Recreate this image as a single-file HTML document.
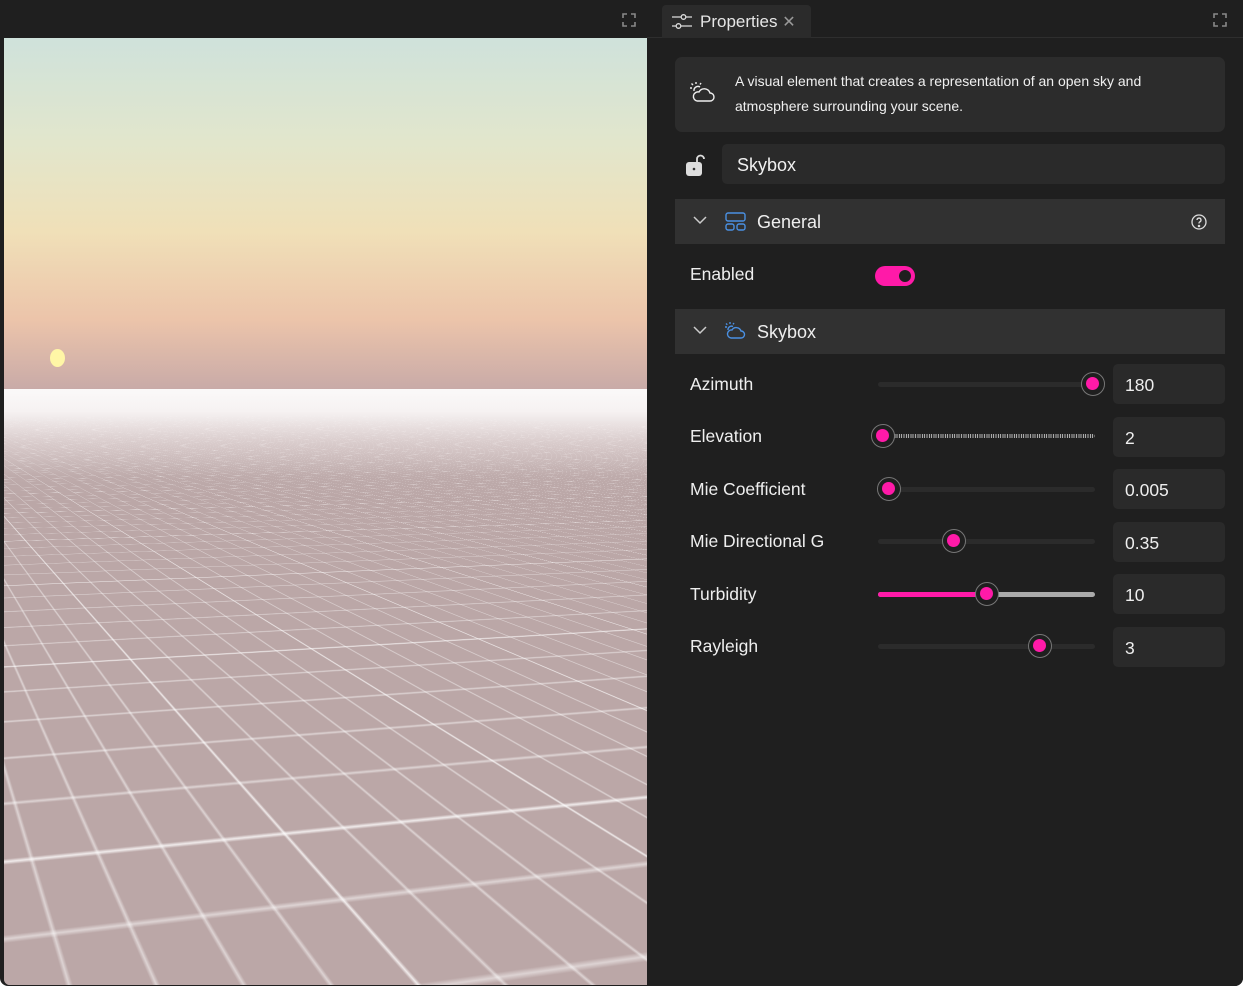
<!DOCTYPE html>
<html><head><meta charset="utf-8">
<style>
*{margin:0;padding:0;box-sizing:border-box}
body{width:1246px;height:992px;background:#fff;font-family:"Segoe UI","Liberation Sans",sans-serif;overflow:hidden;position:relative}
.win{position:absolute;left:0;top:0;width:1243px;height:986px;background:#1f1f1f;border-radius:0 0 8px 8px;overflow:hidden}
.topl{position:absolute;left:0;top:0;width:647px;height:38px;background:#1f1f1f}
.vp{position:absolute;left:4px;top:38px;width:643px;height:947px;overflow:hidden;border-radius:0 0 0 6px;perspective:500px;perspective-origin:-60px 351px;background:#bba7a7}
.sky{position:absolute;left:0;top:0;width:100%;height:352px;background:linear-gradient(180deg,#cfe2db 0%,#e2e6cc 30%,#f0e0b8 55%,#ecc4aa 80%,#c8aaa8 100%);z-index:3}
.plane{position:absolute;left:-3060px;top:52px;width:6000px;height:2600px;transform-origin:50% 450px;transform:rotateX(-90deg) rotateZ(6deg);
background-color:#bba7a7;
background-image:
linear-gradient(90deg,rgba(255,255,255,.55) 0 1.2px,transparent 1.2px),
linear-gradient(0deg,rgba(255,255,255,.55) 0 1.2px,transparent 1.2px),
linear-gradient(90deg,rgba(255,255,255,.5) 0 .8px,transparent .8px),
linear-gradient(0deg,rgba(255,255,255,.5) 0 .8px,transparent .8px);
background-size:110px 110px,110px 110px,22px 22px,22px 22px}
.fog{position:absolute;left:0;top:351px;width:100%;height:110px;background:linear-gradient(180deg,#fbf9f9 0%,#f6f2f2 20%,rgba(235,226,226,.7) 45%,rgba(200,185,185,.2) 80%,rgba(187,167,167,0) 100%);z-index:3}
.sun{position:absolute;left:46px;top:311px;width:15px;height:18px;border-radius:50%;background:#fff6a6;z-index:4}
.right{position:absolute;left:647px;top:0;width:596px;height:986px;background:#1f1f1f}
.tab{position:absolute;left:15px;top:5px;width:149px;height:33px;background:#2b2b2b;border-radius:4px 4px 0 0;color:#e6e6e6;font-size:17px;line-height:33px;padding-left:38px}
.tabline{position:absolute;left:0;top:37px;width:100%;height:1px;background:#2e2e2e}
.desc{position:absolute;left:28px;top:57px;width:550px;height:75px;background:#2c2c2c;border-radius:7px;color:#f0f0f0;font-size:14px;line-height:25px;padding:12px 0 0 60px}
.name{position:absolute;left:75px;top:144px;width:503px;height:40px;background:#2a2a2a;border-radius:5px;color:#f0f0f0;font-size:18px;line-height:42px;padding-left:15px}
.sec{position:absolute;left:28px;width:550px;height:45px;background:#313131;color:#eee;font-size:18px;line-height:46px;padding-left:82px}
.lbl{position:absolute;left:43px;color:#eee;font-size:17.5px}
.box{position:absolute;left:466px;width:112px;height:40px;background:#2a2a2a;border-radius:5px;color:#eee;font-size:17.5px;line-height:42px;padding-left:12px}
.track{position:absolute;left:231px;width:217px;height:5px;background:#2b2b2b;border-radius:3px}
.knob{position:absolute;width:24px;height:24px;border-radius:50%;background:#1f1f1f;border:1.5px solid #777}
.knob::after{content:"";position:absolute;left:4px;top:4px;width:13px;height:13px;border-radius:50%;background:#ff1aa8}
.tog{position:absolute;left:228px;top:266px;width:40px;height:20px;border-radius:10px;background:#ff1aa8}
.tog::after{content:"";position:absolute;right:4px;top:4px;width:12px;height:12px;border-radius:50%;background:#1f1f1f}
</style></head><body>
<div class="win">
<div class="topl"></div>
<svg style="position:absolute;left:622px;top:13px" width="14" height="14" viewBox="0 0 14 14" fill="none" stroke="#888" stroke-width="1.6"><path d="M1 5V1h4M9 1h4v4M13 9v4H9M5 13H1V9"/></svg>
<div class="vp">
<div class="plane"></div>
<div class="sky"></div>
<div class="fog"></div>
<div class="sun"></div>
<svg style="position:absolute;left:510px;top:826px;z-index:5" width="110" height="100">
<circle cx="14" cy="51" r="8" fill="#d45a5a"/>
<circle cx="53" cy="90" r="8" fill="#5aa85a"/>
<circle cx="57" cy="46" r="8" fill="#5b7fd0"/>
<line x1="54" y1="20" x2="54" y2="52" stroke="#1a9a1a" stroke-width="2"/>
<line x1="54" y1="52" x2="90" y2="52" stroke="#e01010" stroke-width="2"/>
<circle cx="54" cy="13" r="10" fill="#1aaa1a"/><text x="54" y="18" fill="#fff" font-size="13" font-weight="bold" text-anchor="middle" font-family="Liberation Sans">Y</text>
<circle cx="93" cy="52" r="10" fill="#ee1010"/><text x="93" y="57" fill="#fff" font-size="13" font-weight="bold" text-anchor="middle" font-family="Liberation Sans">X</text>
<circle cx="50" cy="58" r="10" fill="#1a4ef0"/><text x="50" y="63" fill="#fff" font-size="13" font-weight="bold" text-anchor="middle" font-family="Liberation Sans">Z</text>
</svg>
</div>
<div class="right">
<div class="tabline"></div>
<div class="tab">Properties <span style="color:#999;font-size:16px">✕</span>
<svg style="position:absolute;left:10px;top:8px" width="20" height="17" fill="none" stroke="#ddd" stroke-width="1.3"><path d="M0 4h9M14 4h6M0 13h4M9 13h11"/><circle cx="11.5" cy="4" r="2.3"/><circle cx="6.5" cy="13" r="2.3"/></svg>
</div>
<svg style="position:absolute;left:566px;top:13px" width="14" height="14" viewBox="0 0 14 14" fill="none" stroke="#888" stroke-width="1.6"><path d="M1 5V1h4M9 1h4v4M13 9v4H9M5 13H1V9"/></svg>
<div class="desc">A visual element that creates a representation of an open sky and<br>atmosphere surrounding your scene.
<svg style="position:absolute;left:14px;top:23px" width="28" height="26" fill="none" stroke="#eee" stroke-width="1.4"><path d="M8 21h13a4 4 0 0 0 0-8 6 6 0 0 0-11-1 4.5 4.5 0 0 0-2 9z"/><path d="M5 11a4 4 0 0 1 6-4M7 2v2M1 8h2M2.5 3.5l1.5 1.5M12 3l-1 1.5"/></svg>
</div>
<svg style="position:absolute;left:38px;top:153px" width="22" height="24"><path d="M12 9V6a3.5 3.5 0 0 1 7 0" fill="none" stroke="#ddd" stroke-width="1.8"/><rect x="1" y="9" width="16" height="14" rx="3" fill="#ddd"/><circle cx="9" cy="16" r="1.3" fill="#333"/></svg>
<div class="name">Skybox</div>
<div class="sec" style="top:199px">General
<svg style="position:absolute;left:18px;top:17px" width="14" height="10" fill="none" stroke="#ccc" stroke-width="1.5"><path d="M1 1l6 6 6-6"/></svg>
<svg style="position:absolute;left:50px;top:13px" width="21" height="19" fill="none" stroke="#4a90e2" stroke-width="1.4"><rect x="1" y="1" width="19" height="8" rx="2"/><rect x="1" y="12" width="8" height="6" rx="2"/><rect x="12" y="12" width="8" height="6" rx="2"/></svg>
<svg style="position:absolute;left:516px;top:15px" width="16" height="16" fill="none" stroke="#ddd" stroke-width="1.3"><circle cx="8" cy="8" r="7"/><path d="M6 6a2 2 0 1 1 2.5 2c-.5.3-.5.7-.5 1.5"/><circle cx="8" cy="12" r=".6" fill="#ddd"/></svg>
</div>
<div class="lbl" style="top:264px">Enabled</div>
<div class="tog"></div>
<div class="sec" style="top:309px">Skybox
<svg style="position:absolute;left:18px;top:17px" width="14" height="10" fill="none" stroke="#ccc" stroke-width="1.5"><path d="M1 1l6 6 6-6"/></svg>
<svg style="position:absolute;left:49px;top:12px" width="22" height="20" fill="none" stroke="#4a90e2" stroke-width="1.4"><path d="M7 17h10a3.5 3.5 0 0 0 0-7 5 5 0 0 0-9-1 4 4 0 0 0-1 8z"/><path d="M4 9a3.5 3.5 0 0 1 5-3.5M6 1v2M1 6h2M2 2.5l1.3 1.3M10 2l-1 1.3"/></svg>
</div>
<div class="lbl" style="top:374px">Azimuth</div>
<div class="track" style="top:382px"></div><div class="knob" style="left:434px;top:372px"></div>
<div class="box" style="top:364px">180</div>
<div class="lbl" style="top:426px">Elevation</div>
<div class="track" style="top:434px;left:245px;width:203px;height:4px;background:repeating-linear-gradient(90deg,#aaa 0 1px,#2b2b2b 1px 2.3px)"></div><div class="knob" style="left:224px;top:424px"></div>
<div class="box" style="top:417px">2</div>
<div class="lbl" style="top:479px">Mie Coefficient</div>
<div class="track" style="top:487px"></div><div class="knob" style="left:230px;top:477px"></div>
<div class="box" style="top:469px">0.005</div>
<div class="lbl" style="top:531px">Mie Directional G</div>
<div class="track" style="top:539px"></div><div class="knob" style="left:295px;top:529px"></div>
<div class="box" style="top:522px">0.35</div>
<div class="lbl" style="top:584px">Turbidity</div>
<div class="track" style="top:592px;background:#aaa"></div><div class="track" style="top:592px;width:100px;background:#ff1aa8"></div><div class="knob" style="left:328px;top:582px"></div>
<div class="box" style="top:574px">10</div>
<div class="lbl" style="top:636px">Rayleigh</div>
<div class="track" style="top:644px"></div><div class="knob" style="left:381px;top:634px"></div>
<div class="box" style="top:627px">3</div>
</div>
</div>
</body></html>
